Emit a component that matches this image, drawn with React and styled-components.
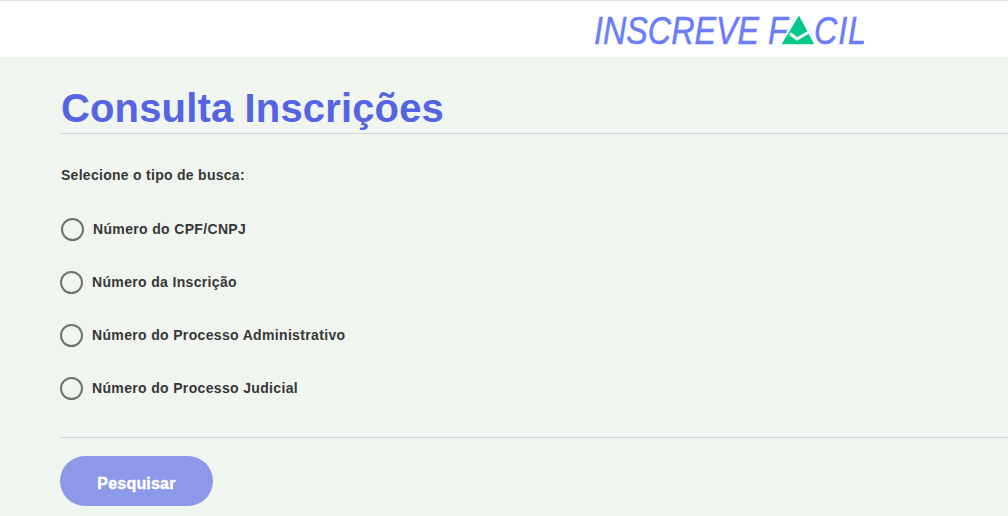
import styled, { createGlobalStyle } from 'styled-components';

const GlobalStyle = createGlobalStyle`
    html, body {
        margin:0;
        padding:0;
        background:#f0f5f0;
        font-family:"Liberation Sans", Arial, sans-serif;
        overflow:hidden;
    }
`
const Header = styled.header`
    height:56px;
    background:#fff;
    border-top:1px solid #e0e0e0;
    display:flex;
    align-items:center;
    padding-left:594px;
`
const Logo = styled.div`
    display:flex;
    align-items:center;
    color:#6b7dfb;
    font-family:"Liberation Sans", sans-serif;
    font-style:italic;
    font-size:38px;
    line-height:1;
    height:38px;
    margin-top:3px;
`
const LogoText = styled.span`
    display:inline-block;
    transform:scaleX(0.85);
    transform-origin:left center;
    width:${props => props.$width}px;
    letter-spacing:${props => props.$spacing || 0}px;
    white-space:nowrap;
    -webkit-text-stroke:0.5px #6b7dfb;
`
const LogoMark = styled.svg`
    width:34px;
    height:30px;
    margin:-1px -2px 0 0;
    flex:none;
    position:relative;
    z-index:1;
`
const Main = styled.main`
    padding:0 0 0 60px;
`
const Title = styled.h1`
    margin:0;
    height:77px;
    box-sizing:border-box;
    padding:28px 0 0 1px;
    font-size:40px;
    line-height:46px;
    font-weight:700;
    letter-spacing:0.15px;
    color:#5565e2;
    border-bottom:1px solid #cdd5e0;
`
const Label = styled.p`
    margin:0;
    padding:33px 0 0 1px;
    font-size:14px;
    line-height:16px;
    font-weight:700;
    letter-spacing:0.28px;
    color:#373737;
`
const Options = styled.div`
    display:flex;
    flex-direction:column;
    margin-top:35px;
    padding-bottom:37px;
    border-bottom:1px solid #cdd5e0;
`
const Option = styled.label`
    display:flex;
    align-items:center;
    height:23px;
    gap:9px;
    padding-left:${props => props.$inset ? 1 : 0}px;
    margin-bottom:${props => props.$last ? 0 : 30}px;
    cursor:pointer;
`
const Radio = styled.input.attrs({ type: 'radio', name: 'tipo' })`
    appearance:none;
    margin:0;
    width:23px;
    height:23px;
    border:2px solid #6e736e;
    border-radius:50%;
    background:transparent;
    box-sizing:border-box;
    flex:none;
`
const OptionText = styled.span`
    font-size:14px;
    line-height:16px;
    font-weight:700;
    letter-spacing:0.34px;
    color:#373737;
    position:relative;
    top:-1px;
`
const Button = styled.button`
    display:block;
    margin-top:18px;
    width:153px;
    height:50px;
    padding:5px 0 0;
    border:none;
    border-radius:25px;
    background:#8c99e8;
    color:#fff;
    font-family:"Liberation Sans", sans-serif;
    font-size:16px;
    font-weight:700;
    letter-spacing:0.2px;
    -webkit-text-stroke:0.4px #fff;
    cursor:pointer;
`

const options = [
    'Número do CPF/CNPJ',
    'Número da Inscrição',
    'Número do Processo Administrativo',
    'Número do Processo Judicial',
]

const App = () => {
    return (
        <>
            <GlobalStyle />
            <Header>
                <Logo>
                    <LogoText $width={188}>INSCREVE F</LogoText>
                    <LogoMark viewBox="0 0 34 30">
                        <path d="M17 2 L31 28.5 L1 28.5 Z" fill="#05c98a" stroke="#05c98a" strokeWidth="1.5" strokeLinejoin="round" />
                        <path d="M8 18.5 L15 24 L33 13.5" fill="none" stroke="#fff" strokeWidth="3" />
                    </LogoMark>
                    <LogoText $width={52} $spacing={1}>CIL</LogoText>
                </Logo>
            </Header>
            <Main>
                <Title>Consulta Inscrições</Title>
                <Label>Selecione o tipo de busca:</Label>
                <Options>
                    {options.map((option, i) => (
                        <Option key={option} $inset={i === 0} $last={i === options.length - 1}>
                            <Radio />
                            <OptionText>{option}</OptionText>
                        </Option>
                    ))}
                </Options>
                <Button>Pesquisar</Button>
            </Main>
        </>
    )
}

export default App
